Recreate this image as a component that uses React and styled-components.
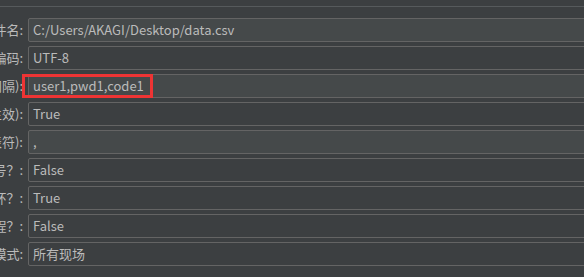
import React from "react";
import styled, { createGlobalStyle } from "styled-components";

const GlobalStyle = createGlobalStyle`
  html, body {
    margin: 0;
    padding: 0;
    background: #3c3f41;
    overflow: hidden;
  }
  body {
    font-family: "Noto Sans CJK SC", "Noto Sans", sans-serif;
  }
`;

const Panel = styled.div`
  width: 584px;
  height: 277px;
  overflow: hidden;
  padding-top: 6px;
  box-sizing: border-box;
  background: #3c3f41;
`;

const TopRule = styled.div`
  height: 0;
  border-top: 1px solid #565a5c;
  margin-right: -4px;
`;

const Form = styled.div`
  display: flex;
  flex-direction: column;
  gap: 4px;
  padding-top: 11px;
  margin-right: -10px;
`;

const Row = styled.div`
  display: grid;
  grid-template-columns: 24px 1fr;
  column-gap: 4px;
  height: 24px;
  position: relative;
`;

const Label = styled.div`
  display: flex;
  justify-content: flex-end;
  align-items: center;
  overflow: hidden;
  white-space: nowrap;
  color: #bbbbbb;
  font-size: 13px;
  line-height: 24px;
  padding-right: 1px;
`;

const Field = styled.div`
  box-sizing: border-box;
  height: 24px;
  border: 1px solid #646464;
  border-radius: 2px;
  background: ${(p) => (p.$light ? "#45494a" : "#3c3f41")};
  color: #bbbbbb;
  font-size: 13px;
  line-height: 22px;
  padding-left: 4px;
  white-space: nowrap;
  overflow: hidden;
`;

const Highlight = styled.div`
  position: absolute;
  left: 22px;
  top: 0;
  width: 131px;
  height: 24px;
  box-sizing: border-box;
  border: 3px solid #ee3434;
  pointer-events: none;
`;

const rows = [
  { label: "文件名:", value: "C:/Users/AKAGI/Desktop/data.csv", light: true },
  { label: "文件编码:", value: "UTF-8" },
  { label: "变量名称(西文逗号间隔):", value: "user1,pwd1,code1", light: true, mark: true },
  { label: "忽略首行(只在设置了变量名称后才生效):", value: "True" },
  { label: "分隔符(用'\\t'代替制表符):", value: ",", light: true },
  { label: "是否允许带引号？:", value: "False" },
  { label: "遇到文件结束符再次循环？:", value: "True" },
  { label: "遇到文件结束符停止线程？:", value: "False" },
  { label: "线程共享模式:", value: "所有现场" },
];

export default function App() {
  return (
    <>
      <GlobalStyle />
      <Panel>
        <TopRule />
        <Form>
          {rows.map((r) => (
            <Row key={r.label}>
              <Label>{r.label}</Label>
              <Field $light={r.light}>{r.value}</Field>
              {r.mark && <Highlight />}
            </Row>
          ))}
        </Form>
      </Panel>
    </>
  );
}
